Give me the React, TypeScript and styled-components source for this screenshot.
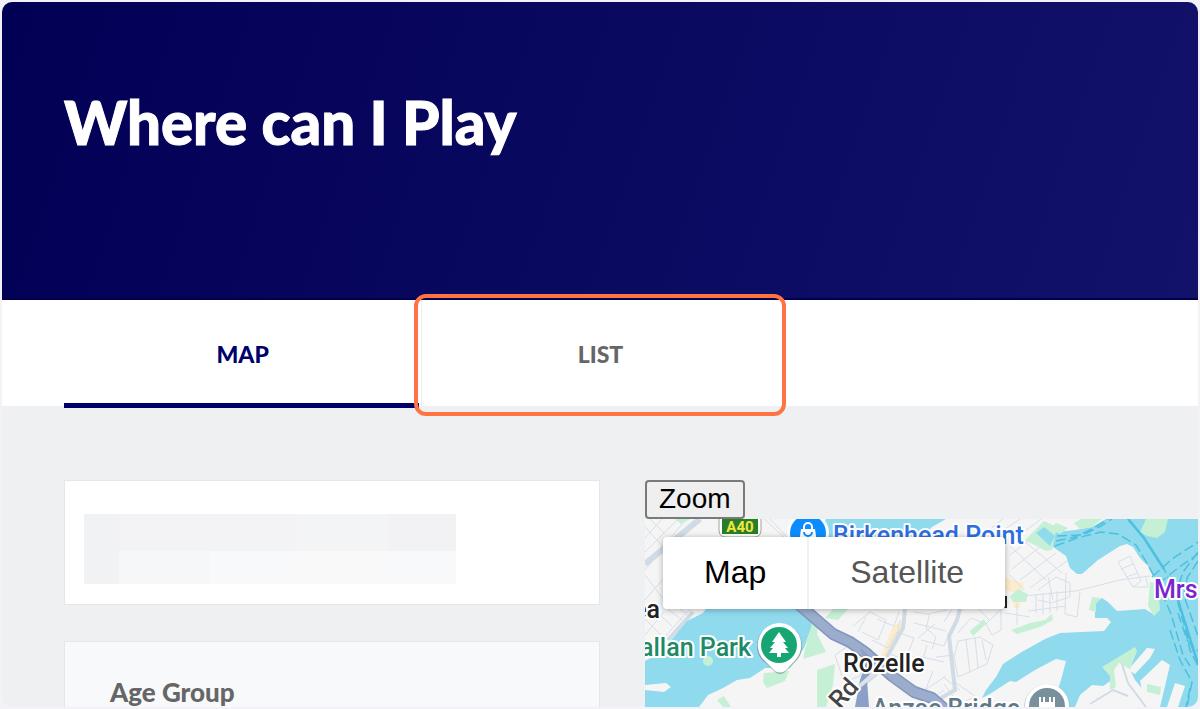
import React from "react";
import styled, { createGlobalStyle, css } from "styled-components";

const GlobalStyle = createGlobalStyle`
  *, *::before, *::after { box-sizing: border-box; }
  body {
    margin: 0;
    background: #f3f2f8;
    font-family: Lato, "Open Sans", sans-serif;
  }
  button { font: inherit; cursor: pointer; }
`;

const Frame = styled.main`
  display: flex;
  flex-direction: column;
  height: calc(100vh - 4px);
  margin: 2px;
  overflow: hidden;
  border-radius: 10px;
  background: #eff0f2;
`;

const Hero = styled.header`
  flex: none;
  padding: 85px 62px 141px;
  border-bottom: 2px solid #00004c;
  background: linear-gradient(108deg, #010055, #13126b);
`;

const Title = styled.h1`
  margin: 0;
  color: #fff;
  font-size: 60px;
  font-weight: 900;
  line-height: 70px;
  -webkit-text-stroke: 1px #fff;
`;

const TabBar = styled.div`
  display: grid;
  flex: none;
  grid-template-columns: repeat(3, minmax(0, 1fr));
  padding: 0 62px;
  background: #fff;
`;

const Tab = styled.button<{ $active?: boolean }>`
  position: relative;
  height: 106px;
  padding: 2px 0 0;
  border: 0;
  background: transparent;
  color: ${(p) => (p.$active ? "#00006c" : "#666")};
  font-size: 23px;
  font-weight: 900;
  text-transform: uppercase;

  ${(p) =>
    p.$active
      ? css`
          &::after {
            content: "";
            position: absolute;
            inset: auto 2px -2px 0;
            height: 5px;
            background: #00006c;
          }
        `
      : css`
          border-left: 1px solid #ececee;
        `}
`;

const Highlight = styled.span`
  position: absolute;
  z-index: 1;
  inset: -6px -7px -10px -8px;
  border: 4px solid #ff7442;
  border-radius: 12px;
  pointer-events: none;
`;

const Content = styled.div`
  display: grid;
  flex: 1;
  grid-template-columns: minmax(0, 536fr) minmax(0, 553fr);
  gap: 45px;
  min-height: 0;
  padding: 74px 0 0 62px;
`;

const Filters = styled.section`
  display: flex;
  flex-direction: column;
  gap: 36px;
`;

const SearchCard = styled.div`
  flex: none;
  padding: 33px 19px 20px;
  border: 1px solid #e6e7e9;
  background: #fff;
`;

const Masked = styled.div`
  display: grid;
  grid-template-columns: 35fr 90fr 86fr 91fr 68fr;
  grid-template-rows: 37px 33px;
  width: 75%;
`;

const MaskCell = styled.span<{ $tone: string; $tall?: boolean }>`
  grid-row: ${(p) => (p.$tall ? "span 2" : "auto")};
  background: ${(p) => p.$tone};
`;

const GroupCard = styled.div`
  flex: 1;
  padding: 36px 45px 0;
  border: 1px solid #e6e7e9;
  border-bottom: 0;
  background: #f8f9fb;
`;

const GroupTitle = styled.h2`
  margin: 0;
  color: #666;
  font-size: 26px;
  font-weight: 900;
  line-height: 28px;
`;

const MapColumn = styled.section`
  display: flex;
  flex-direction: column;
  align-items: flex-start;
  min-height: 0;
`;

const ZoomButton = styled.button`
  flex: none;
  height: 39px;
  padding: 0 12px 2px;
  border: 2px solid #7a7a7a;
  border-radius: 4px;
  background: #efefef;
  color: #000;
  font-family: "Liberation Sans", Arial, sans-serif;
  font-size: 28px;
  line-height: 32px;
`;

const MapPane = styled.div`
  position: relative;
  flex: 1;
  width: 100%;
  min-height: 0;
  overflow: hidden;
  background: #f5f5f5;
`;

const MapDrawing = styled.svg`
  display: block;
  width: 100%;
  height: 100%;
`;

const MapTypes = styled.div`
  position: absolute;
  top: 18px;
  left: 18px;
  display: flex;
  border-radius: 4px;
  background: #fff;
  box-shadow: 0 1px 6px rgba(0, 0, 0, 0.3);
`;

const MapType = styled.button<{ $active?: boolean }>`
  height: 72px;
  padding: 0 41px 2px;
  border: 0;
  border-left: ${(p) => (p.$active ? "0" : "2px solid #f1f1f1")};
  background: transparent;
  color: ${(p) => (p.$active ? "#000" : "#565656")};
  font-family: "Liberation Sans", Arial, sans-serif;
  font-size: 32px;
`;

const Label = styled.text`
  font-family: Roboto, sans-serif;
  font-size: 25px;
  font-weight: 500;
  paint-order: stroke;
  stroke: #fff;
  stroke-width: 4px;
  stroke-linejoin: round;
`;

const maskTones = ["#f3f3f5", "#f3f3f5", "#f3f4f6", "#f2f2f4", "#f6f7f9", "#f8f9fb", "#f9f9f9", "#f8f9fb"];

const parks = [
  "M813 614L818 627L817 634L826 652L803 659L807 640L811 628Z",
  "M825 618L835 607H850L838 620Z",
  "M817 670L835 664L833 685L826 707H817Z",
  "M764 673L789 671L785 681L767 688L763 682Z",
  "M717 700L724 696L731 707H723Z",
  "M675 519H690L681 524Z",
  "M1025 540L1044 521L1057 527L1052 550L1046 551Z",
  "M1056 523L1068 528L1060 534L1050 530Z",
  "M1074 523L1081 519H1102L1092 527L1080 529Z",
  "M1010 596L1018 589L1028 594L1026 602L1013 602Z",
  "M1011 630L1030 623L1045 620L1052 614L1053 620L1040 627L1017 634Z",
  "M970 631L984 619L986 624L973 636Z",
  "M1089 610L1092 597L1101 598L1096 604V612Z",
  "M1150 582L1158 583L1160 610L1154 616L1148 606Z",
];

const streets =
  "M645 538L662 519M645 552L678 519M645 570L686 519M645 600L664 578M645 635L664 612M651 652L690 609M645 527L664 548M650 519L664 533M645 575L664 600M645 619L664 638M653 609L672 626M668 609L682 620M680 609L688 615" +
  "M764 519L784 537M770 519L790 540" +
  "M835 655L851 644L866 658L860 676L844 682ZM847 664L861 657M853 626L870 612L886 620L878 640L862 632M866 617L858 632M872 640L888 648L897 632L914 638L905 660L890 654M877 619L894 626L899 612M914 612L928 614L947 610M914 623L946 631M921 640L944 646L949 634M918 656L944 662M927 645L919 674M935 624L918 638M944 622L952 609M902 680L925 690L946 676M933 671L924 694M900 620L896 640M943 677L960 690M930 700L944 690" +
  "M958 641L980 637L993 645L987 664L958 677L954 657ZM966 640L970 673M975 638L978 668M982 640L986 660M955 655L936 657M958 633L971 618M971 618L986 624L1001 609M986 624L992 635L1001 630M1001 609V630M979 609L990 621M953 681L975 696L960 705M944 684L955 699M930 613L926 628L936 637L932 649" +
  "M1010 555L1033 537M1012 569L1045 543M1020 580L1056 553M1030 588L1068 560M1010 546L1046 580M1022 539L1062 573M1034 532L1048 549M1010 575L1024 590M985 533L1003 519M999 533L1020 519M1012 541L1041 519M1038 590L1056 577L1070 583V597L1051 603L1038 600M1048 577L1053 600M1024 596L1076 591L1120 580L1150 576M1028 611L1066 606M1036 594V613M1043 593V615M1050 592V613M1057 591V611M1066 573L1065 614L1077 617L1080 592M1005 613L1030 617M1017 603V625" +
  "M1118 562L1130 556L1141 581L1133 587ZM1121 569L1133 564M1126 577L1138 573M1133 587H1148L1146 578M1120 665L1125 682L1138 698L1142 707M1098 707L1112 690L1127 695M1086 700L1113 690";

const ferries =
  "M1057 536L1083 535L1101 526L1112 519M1055 546L1077 538L1101 532L1118 534L1136 545L1148 565L1158 584L1171 614L1183 655L1190 666M1056 541L1075 537L1094 528L1108 519" +
  "M1128 519L1144 538L1164 569L1174 590L1183 620L1190 650L1198 666M1152 577L1172 559L1198 542M1158 584L1178 568L1198 554M1198 552L1183 572L1177 590L1182 618L1195 656M1198 561L1187 578L1184 596L1198 636M1170 630L1180 660L1192 682L1187 707M1178 613L1187 640L1198 651M1190 688L1186 707";

function MapArt() {
  return (
    <MapDrawing viewBox="645 519 553 188" preserveAspectRatio="xMinYMin slice" role="img" aria-label="Map of Rozelle">
      <rect x="645" y="519" width="553" height="188" fill="#f5f5f5" />
      <g fill="#fdebcd">
        <path d="M1004 577L1024 583L1021 594L1004 590Z" />
        <path d="M1013 602L1020 600V608H1014Z" />
        <path d="M893 626L907 620L886 658L878 664ZM865 670L878 664L874 675L862 680Z" />
      </g>
      <path d={streets} fill="none" stroke="#d5dfe8" strokeWidth="1" />
      <g fill="none" stroke="#d1dbe5">
        <path d="M645 564L700 519" strokeWidth="6" />
        <path d="M668 640L693 612" strokeWidth="4" />
        <path d="M960 609L957 620L949 636L955 690L941 698" strokeWidth="4" />
        <path d="M905 609L903 628L888 655L875 675L850 696" strokeWidth="4" />
      </g>
      <g fill="#90daee">
        <path d="M826 519H946L932 527L900 560L850 590L812 610L814 620L804 648L790 668H765L750 678L737 680L723 688L708 695L699 707H645V690L664 692L671 687L666 683L645 685V661L660 653L673 638L687 621L703 613L712 600L800 560Z" />
        <path d="M1035 533L1044 526L1056 532L1075 530L1092 527L1106 519H1198V707H1057L1056 695L1061 680L1066 661L1056 659L1035 670L1016 682L1010 681L990 694L982 698L986 690L996 677L1003 664L1020 653L1045 639L1060 633L1104 631L1111 622L1107 618H1095V603L1102 598L1108 602L1117 611L1145 609L1153 614L1156 605L1155 580L1150 568L1140 558L1133 547L1127 544L1120 546L1098 560L1082 574L1077 574L1070 568L1066 556L1053 547Z" />
      </g>
      <g fill="#f5f5f5">
        <path d="M1075 707L1080 695L1092 685L1103 686L1112 680L1114 665L1121 660L1127 664L1135 680L1150 698L1152 707Z" />
        <path d="M1147 648L1155 649L1150 658L1135 674L1128 670Z" />
        <path d="M1162 660L1170 665L1160 707H1146L1140 681Z" />
        <path d="M1175 683L1185 686L1178 707H1167Z" />
      </g>
      <g fill="#c5f0d5">
        {parks.map((d) => (
          <path key={d} d={d} />
        ))}
        <path d="M1140 532L1146 519H1168L1165 532L1157 538L1147 536Z" />
        <path d="M1102 667L1135 647L1137 651L1130 669L1119 663L1114 670L1116 687L1110 690V676Z" />
        <path d="M1147 684L1161 687L1160 695L1147 692Z" />
        <circle cx="708" cy="661" r="5" />
      </g>
      <path d="M1036 533L1044 527L1055 536L1050 546Z" fill="#90daee" />
      <path d="M1122 664L1128 683L1146 707M1090 704L1113 690L1128 696" fill="none" stroke="#d1dbe5" strokeWidth="2" />
      <path d={ferries} fill="none" stroke="#4dbfdf" strokeWidth="1.5" strokeDasharray="10 4" />
      <path d="M1128 519L1144 538L1164 569M1178 600L1198 664" fill="none" stroke="#4dbfdf" strokeWidth="2.5" />
      <g fill="none" strokeLinejoin="round">
        <path d="M796 602L833 634L850 642L866 653L892 676L914 692L932 698L948 712" stroke="#8294bd" strokeWidth="12" />
        <path d="M796 602L833 634L850 642L866 653L892 676L914 692L932 698L948 712" stroke="#9badcd" strokeWidth="9" />
      </g>
      <path d="M860 648L876 661L867 680L869 707H855L860 680L866 662Z" fill="#8c9fc7" />
      <path d="M848 696L876 672" stroke="#dbe3ea" strokeWidth="4" />

      <g>
        <path d="M719 518H761V530Q761 537 754 537H726Q719 537 719 530Z" fill="#fff" stroke="#9aaa8c" />
        <path d="M722 518H758V534H722Z" fill="#267f28" />
        <text x="740" y="532" textAnchor="middle" fill="#f5e53b" fontFamily="Roboto, sans-serif" fontSize="15" fontWeight="700">
          A40
        </text>
      </g>

      <g>
        <circle cx="808" cy="533" r="21" fill="#fff" />
        <circle cx="808" cy="533" r="18" fill="#0c8dff" />
        <path d="M801 529H815L817 543H799Z" fill="#fff" />
        <path d="M804 530V527A4 4 0 0 1 812 527V530" fill="none" stroke="#fff" strokeWidth="2" />
        <path d="M804 532A4 4 0 0 0 812 532" fill="none" stroke="#0c8dff" strokeWidth="2" />
      </g>

      <Label x="833" y="544" fill="#2d6fe0">Birkenhead Point</Label>
      <Label x="660" y="618" textAnchor="end" fill="#222">ea</Label>
      <Label x="751" y="656" textAnchor="end" fill="#1f8a66">Callan Park</Label>
      <Label x="843" y="672" fill="#222">Rozelle</Label>
      <Label x="1154" y="598" fill="#7a26cf">Mrs Macquarie’s</Label>
      <Label x="872" y="717" fill="#5d7886">Anzac Bridge</Label>
      <Label transform="translate(840 710) rotate(-48)" fill="#444">Rd</Label>
      <path d="M1006 596V607H1002" fill="none" stroke="#222" strokeWidth="2" />

      <g>
        <path d="M779 624A22 22 0 0 0 762 660Q766 663 771 668L775 672Q780 676 785 672L789 668Q794 663 797 660A22 22 0 0 0 779 624Z" fill="#6b7f80" opacity=".6" />
        <path d="M779 623A22 22 0 0 0 762 658Q766 662 771 667L775 671Q780 674 785 671L789 667Q794 662 797 658A22 22 0 0 0 779 623Z" fill="#fff" />
        <circle cx="779" cy="645" r="18" fill="#17a673" />
        <path d="M779 632L786 642H783L788 648H785L789 653H781V657H777V653H769L773 648H770L775 642H772Z" fill="#fff" />
      </g>

      <g>
        <circle cx="1047" cy="707" r="23" fill="#a9b5bb" opacity=".6" />
        <circle cx="1047" cy="706" r="22" fill="#fff" />
        <circle cx="1047" cy="706" r="18" fill="#78909c" />
        <path d="M1039 697H1041V702H1043V697H1045V702H1049V697H1051V702H1053V697H1055V707H1039Z" fill="#fff" />
      </g>
    </MapDrawing>
  );
}

export default function App() {
  return (
    <>
      <GlobalStyle />
      <Frame>
        <Hero>
          <Title>Where can I Play</Title>
        </Hero>
        <TabBar role="tablist">
          <Tab role="tab" aria-selected="true" $active>
            Map
          </Tab>
          <Tab role="tab" aria-selected="false">
            List
            <Highlight />
          </Tab>
        </TabBar>
        <Content>
          <Filters>
            <SearchCard>
              <Masked aria-hidden="true">
                <MaskCell $tone="#f1f2f4" $tall />
                {maskTones.map((tone, i) => (
                  <MaskCell key={i} $tone={tone} />
                ))}
              </Masked>
            </SearchCard>
            <GroupCard>
              <GroupTitle>Age Group</GroupTitle>
            </GroupCard>
          </Filters>
          <MapColumn>
            <ZoomButton>Zoom</ZoomButton>
            <MapPane>
              <MapArt />
              <MapTypes>
                <MapType $active>Map</MapType>
                <MapType>Satellite</MapType>
              </MapTypes>
            </MapPane>
          </MapColumn>
        </Content>
      </Frame>
    </>
  );
}
